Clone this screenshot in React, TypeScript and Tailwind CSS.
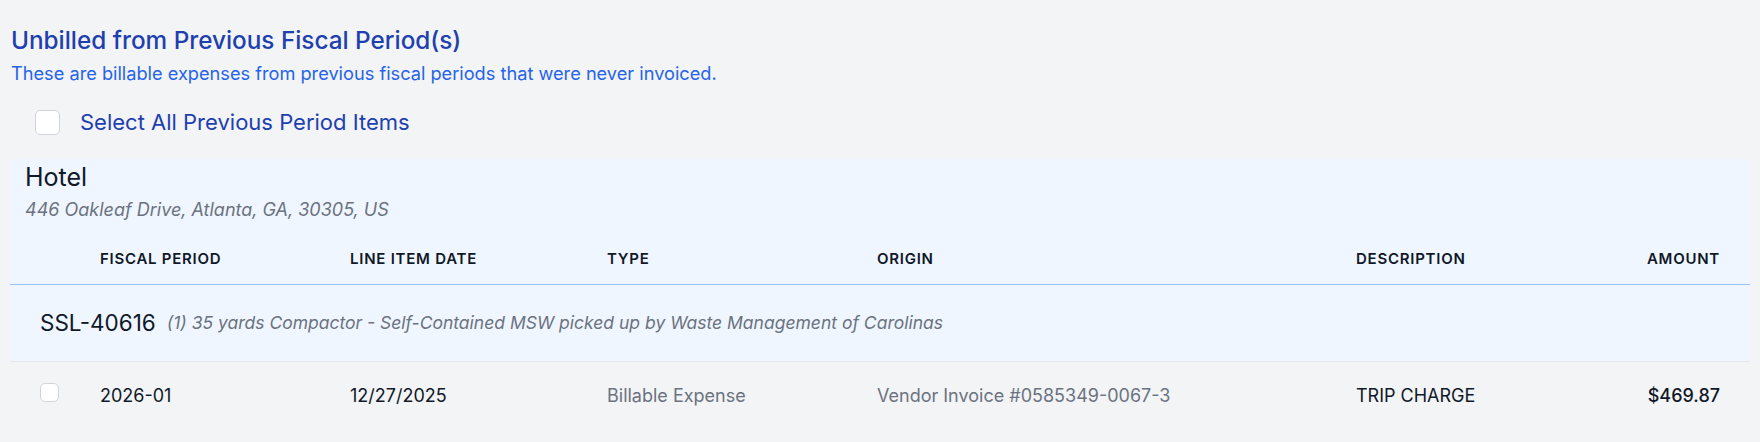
import React from "react";

const cols = "grid grid-cols-[90px_250px_257px_270px_479px_1fr_auto] items-center";

const Box = ({ size }: { size: string }) => (
  <span
    className={`${size} inline-block shrink-0 rounded-[5px] border border-[#d1d5db] bg-white`}
  ></span>
);

const App = () => {
  return (
    <div
      className="min-h-screen bg-[#f3f4f6] px-[10px] pt-[24px]"
      style={{ fontFamily: "Inter, 'Noto Sans', sans-serif" }}
    >
      <h2 className="pl-px text-[24.3px] font-medium leading-[32px] text-[#1e40af]">
        Unbilled from Previous Fiscal Period(s)
      </h2>
      <p className="mt-[4px] pl-px text-[18.2px] leading-[26px] text-[#2563eb]">
        These are billable expenses from previous fiscal periods that were never invoiced.
      </p>
      <label className="mt-[21px] ml-[25px] flex h-[30px] items-center gap-[20px]">
        <Box size="h-[25px] w-[25px]" />
        <span className="text-[22px] leading-[30px] text-[#1e40af]">
          Select All Previous Period Items
        </span>
      </label>

      <div className="mt-[22px] bg-[#eff6ff]">
        <div className="px-[15px] pt-[2px]">
          <div className="text-[25px] leading-[32px] text-[#111827]">Hotel</div>
          <div className="mt-[4px] text-[18px] italic leading-[26px] text-[#6b7280]">
            446 Oakleaf Drive, Atlanta, GA, 30305, US
          </div>
        </div>
        <div
          className={`${cols} mt-[11px] h-[51px] border-b border-[#93c5fd] text-[15px] font-semibold tracking-wider text-[#111827]`}
        >
          <span></span>
          <span>FISCAL PERIOD</span>
          <span>LINE ITEM DATE</span>
          <span>TYPE</span>
          <span>ORIGIN</span>
          <span>DESCRIPTION</span>
          <span className="pr-[30px] text-right">AMOUNT</span>
        </div>
        <div className="flex h-[77px] items-center gap-[11px] border-b border-[#e5e7eb] pl-[30px]">
          <span className="text-[22.5px] text-[#111827]">SSL-40616</span>
          <span className="text-[17.5px] italic text-[#6b7280]">
            (1) 35 yards Compactor - Self-Contained MSW picked up by Waste Management of Carolinas
          </span>
        </div>
      </div>

      <div className={`${cols} h-[66px] text-[18px]`}>
        <span className="pl-[30px]">
          <Box size="h-[19px] w-[19px] block" />
        </span>
        <span className="text-[#111827]">2026-01</span>
        <span className="text-[#111827]">12/27/2025</span>
        <span className="text-[#6b7280]">Billable Expense</span>
        <span className="text-[#6b7280]">Vendor Invoice #0585349-0067-3</span>
        <span className="text-[#111827]">TRIP CHARGE</span>
        <span className="pr-[30px] text-right font-medium text-[#111827]">$469.87</span>
      </div>
    </div>
  );
};

export default App;
